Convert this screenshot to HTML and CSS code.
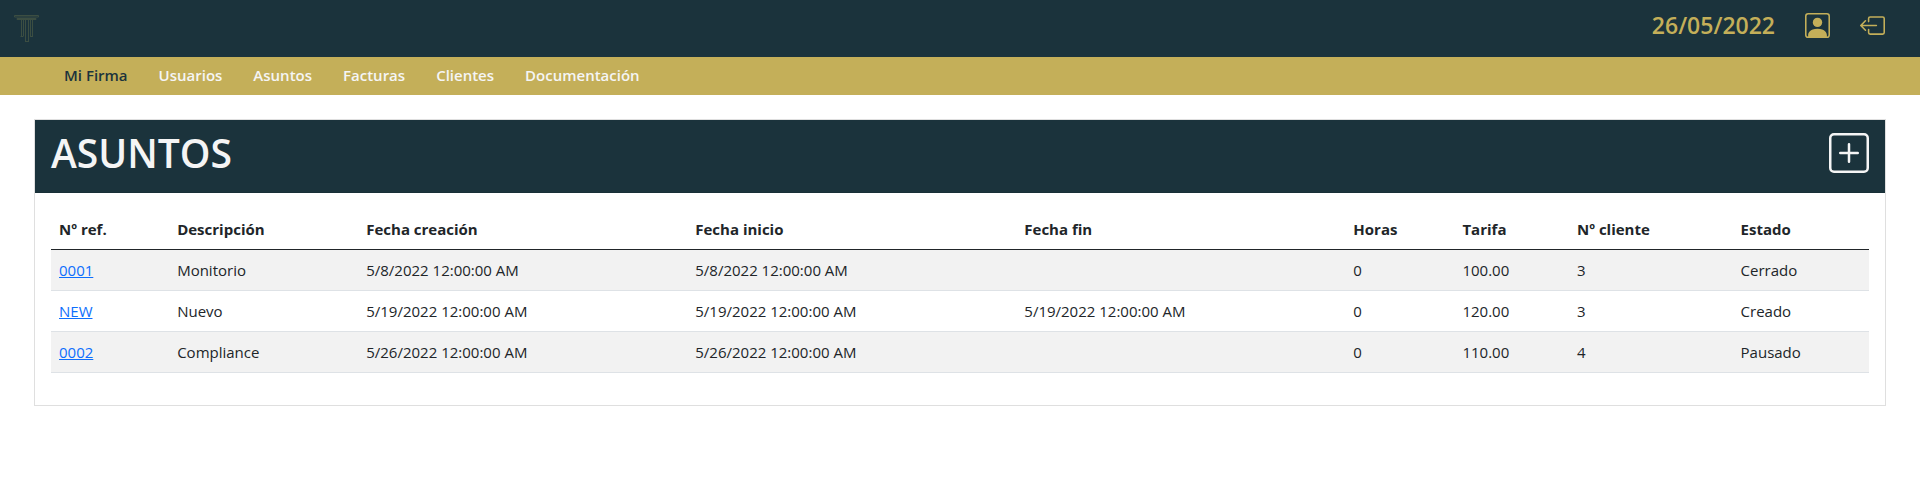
FILE: index.html
```html
<!DOCTYPE html>
<html lang="es">
<head>
<meta charset="utf-8">
<title>Asuntos</title>
<link rel="stylesheet" href="styles.css">
</head>
<body>
<header class="topbar">
  <a class="logo" href="#" aria-label="Inicio">
    <svg width="26" height="28" viewBox="0 0 26 28" fill="none" stroke="currentColor" stroke-width="1">
      <path d="M.5.5h24v1.500H.5zM3 3.500h19v1H3zM7.500 5v16M9.500 5v16M6.500 21.500h3M16.500 5v16M18.500 5v16M16 21.500h3M11.500 4v22M14.500 4v22M11 26.500h4"/>
    </svg>
  </a>
  <div class="tools">
    <span class="date">26/05/2022</span>
    <a class="tool" href="#" aria-label="Perfil">
      <svg width="25" height="25" viewBox="0 0 16 16" fill="currentColor"><path d="M11 6a3 3 0 1 1-6 0 3 3 0 0 1 6 0z"/><path d="M2 0a2 2 0 0 0-2 2v12a2 2 0 0 0 2 2h12a2 2 0 0 0 2-2V2a2 2 0 0 0-2-2H2zm12 1a1 1 0 0 1 1 1v12a1 1 0 0 1-1 1v-1c0-1-1-4-6-4s-6 3-6 4v1a1 1 0 0 1-1-1V2a1 1 0 0 1 1-1h12z"/></svg>
    </a>
    <a class="tool" href="#" aria-label="Salir">
      <svg width="25" height="25" viewBox="0 0 16 16" fill="currentColor"><path fill-rule="evenodd" d="M6 12.500a.5.5 0 0 0 .5.5h8a.5.5 0 0 0 .5-.5v-9a.5.5 0 0 0-.5-.5h-8a.5.5 0 0 0-.5.5v2a.5.5 0 0 1-1 0v-2A1.500 1.500 0 0 1 6.500 2h8A1.500 1.500 0 0 1 16 3.500v9a1.500 1.500 0 0 1-1.500 1.500h-8A1.500 1.500 0 0 1 5 12.500v-2a.5.5 0 0 1 1 0v2z"/><path fill-rule="evenodd" d="M.146 8.354a.5.5 0 0 1 0-.708l3-3a.5.5 0 1 1 .708.708L1.707 7.500H10.500a.5.5 0 0 1 0 1H1.707l2.147 2.146a.5.5 0 0 1-.708.708l-3-3z"/></svg>
    </a>
  </div>
</header>
<nav class="menu">
  <a class="menu-link active" href="#">Mi Firma</a>
  <a class="menu-link" href="#">Usuarios</a>
  <a class="menu-link" href="#">Asuntos</a>
  <a class="menu-link" href="#">Facturas</a>
  <a class="menu-link" href="#">Clientes</a>
  <a class="menu-link" href="#">Documentación</a>
</nav>
<main class="card">
  <div class="card-header">
    <h1 class="title">ASUNTOS</h1>
    <button class="add" type="button" aria-label="Nuevo asunto">
      <svg width="40" height="40" viewBox="0 0 16 16" fill="currentColor"><path d="M14 1a1 1 0 0 1 1 1v12a1 1 0 0 1-1 1H2a1 1 0 0 1-1-1V2a1 1 0 0 1 1-1h12zM2 0a2 2 0 0 0-2 2v12a2 2 0 0 0 2 2h12a2 2 0 0 0 2-2V2a2 2 0 0 0-2-2H2z"/><path d="M8 4a.5.5 0 0 1 .5.5v3h3a.5.5 0 0 1 0 1h-3v3a.5.5 0 0 1-1 0v-3h-3a.5.5 0 0 1 0-1h3v-3A.5.5 0 0 1 8 4z"/></svg>
    </button>
  </div>
  <div class="card-body">
    <table class="table">
      <colgroup>
        <col class="col-ref"><col class="col-desc"><col class="col-date"><col class="col-date"><col class="col-date"><col class="col-hours"><col class="col-rate"><col class="col-client"><col class="col-state">
      </colgroup>
      <thead>
        <tr><th>Nº ref.</th><th>Descripción</th><th>Fecha creación</th><th>Fecha inicio</th><th>Fecha fin</th><th>Horas</th><th>Tarifa</th><th>Nº cliente</th><th>Estado</th></tr>
      </thead>
      <tbody>
        <tr><td><a class="ref" href="#">0001</a></td><td>Monitorio</td><td>5/8/2022 12:00:00 AM</td><td>5/8/2022 12:00:00 AM</td><td></td><td>0</td><td>100.00</td><td>3</td><td>Cerrado</td></tr>
        <tr><td><a class="ref" href="#">NEW</a></td><td>Nuevo</td><td>5/19/2022 12:00:00 AM</td><td>5/19/2022 12:00:00 AM</td><td>5/19/2022 12:00:00 AM</td><td>0</td><td>120.00</td><td>3</td><td>Creado</td></tr>
        <tr><td><a class="ref" href="#">0002</a></td><td>Compliance</td><td>5/26/2022 12:00:00 AM</td><td>5/26/2022 12:00:00 AM</td><td></td><td>0</td><td>110.00</td><td>4</td><td>Pausado</td></tr>
      </tbody>
    </table>
  </div>
</main>
</body>
</html>
```
FILE: styles.css
```css
* { box-sizing: border-box; }
body {
  margin: 0;
  background: #fff;
  color: #212529;
  font-family: "Open Sans", "Noto Sans", sans-serif;
  font-size: 15px;
  line-height: 24px;
}
.topbar {
  display: flex;
  justify-content: space-between;
  align-items: flex-start;
  padding: 13px 35px 8px 14px;
  background: #1b333c;
}
.logo { display: flex; padding-top: 2px; color: #3c4e42; }
.tools {
  display: flex;
  align-items: flex-start;
  gap: 30px;
  color: #c4af59;
}
.date { font-size: 23px; font-weight: 600; line-height: 24px; padding-bottom: 12px; }
.tool { display: flex; color: inherit; }
.menu {
  display: flex;
  gap: 31px;
  padding: 6px 64px 8px;
  background: #c4af59;
}
.menu-link { color: #f5f5f5; font-weight: 600; text-decoration: none; }
.active { color: #1b333c; }
.card { margin: 24px 34px; border: 1px solid #dfdfdf; }
.card-header {
  display: flex;
  justify-content: space-between;
  align-items: flex-start;
  padding: 8px 16px 14px;
  background: #1b333c;
  border-bottom: 1px solid #182f37;
  color: #f5f5f5;
}
.title { margin: 0; font-size: 39px; font-weight: 600; line-height: 50px; }
.add {
  display: flex;
  margin-top: 5px;
  padding: 0;
  border: 0;
  background: none;
  color: inherit;
}
.card-body { padding: 16px 16px 32px; }
.table { width: 100%; table-layout: fixed; border-collapse: collapse; }
.table th, .table td { padding: 8px; text-align: left; border-bottom: 1px solid #dee2e6; }
.table th { font-weight: 700; border-bottom-color: #212529; }
.table tbody tr:nth-child(odd) { background: #f2f2f2; }
.col-ref { width: 6.5%; }
.col-desc { width: 10.4%; }
.col-date { width: 18.1%; }
.col-hours { width: 6%; }
.col-rate { width: 6.3%; }
.col-client { width: 9%; }
.col-state { width: 7.5%; }
.ref { color: #0d6efd; }
```
